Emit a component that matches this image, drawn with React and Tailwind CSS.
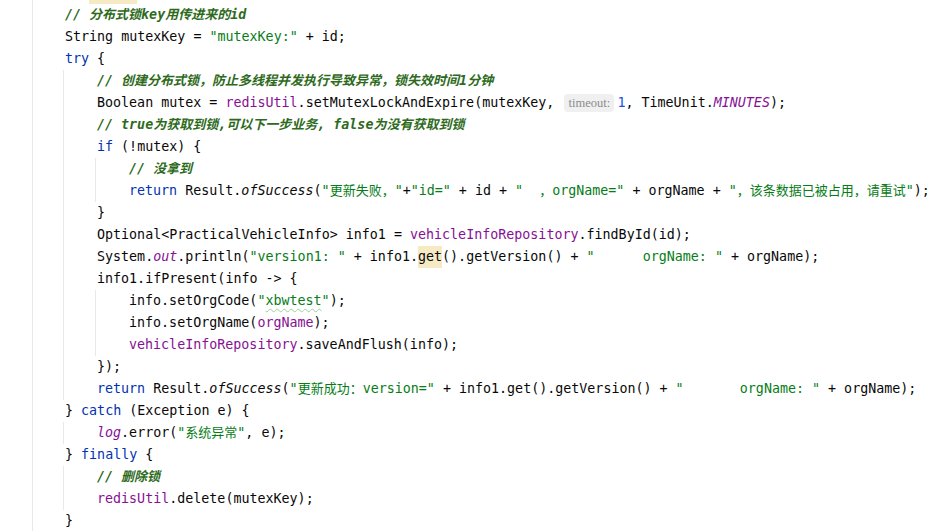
import React from "react";

const CJK = /([\u2E80-\u9FFF\uFF00-\uFFEF\u3000-\u303F]+)/;
function T({ t }) {
  return t
    .split(CJK)
    .map((p, i) =>
      i % 2 ? (
        <span key={i} className="text-[13px]">
          {p}
        </span>
      ) : (
        p
      )
    );
}

const K = ({ children }) => <span className="text-[#0033b3]">{children}</span>;
const S = ({ t, children }) => (
  <span className="text-[#067d17]">{t !== undefined ? <T t={t} /> : children}</span>
);
const N = ({ children }) => <span className="text-[#1750eb]">{children}</span>;
const F = ({ children }) => <span className="text-[#871094]">{children}</span>;
const FI = ({ children }) => <span className="text-[#871094] italic">{children}</span>;
const I = ({ children }) => <span className="italic">{children}</span>;
const Cm = ({ t }) => (
  <span className="text-[#2d6a1b] italic font-bold">
    <T t={t} />
  </span>
);

const Line = ({ children }) => <div className="h-[22px]">{children}</div>;
const Block = ({ children }) => (
  <div className="ml-[-2px] border-l border-[#e8e8e8] pl-[33px]">{children}</div>
);

const Hint = () => (
  <span className="inline-flex items-center justify-center h-[18px] w-[50px] ml-[2px] mr-[3px] rounded-[4px] bg-[#f0f0f0] text-[#8c8c8c] font-['Liberation_Serif',serif] text-[12.5px] leading-none align-middle">
    timeout:
  </span>
);

export default function App() {
  return (
    <div className="w-[937px] h-[531px] overflow-hidden bg-white text-[#080808] font-['DejaVu_Sans_Mono','Noto_Sans_CJK_SC',monospace] text-[13.33px] leading-[22px] whitespace-pre">
      <div className="ml-[32px] border-l border-[#e8e8e8] pl-[32px] mt-[-18px]">
        <Line>
          {"   "}
          <span className="inline-block h-[22px] bg-[#f5eac4]">{"      "}</span>
        </Line>
        <Line>
          <Cm t="// 分布式锁key用传进来的id" />
        </Line>
        <Line>
          String mutexKey = <S t={'"mutexKey:"'} /> + id;
        </Line>
        <Line>
          <K>try</K> {"{"}
        </Line>
        <Block>
          <Line>
            <Cm t="// 创建分布式锁，防止多线程并发执行导致异常，锁失效时间1分钟" />
          </Line>
          <Line>
            Boolean mutex = <F>redisUtil</F>.setMutexLockAndExpire(mutexKey, <Hint />
            <N>1</N>, TimeUnit.<FI>MINUTES</FI>);
          </Line>
          <Line>
            <Cm t="// true为获取到锁,可以下一步业务, false为没有获取到锁" />
          </Line>
          <Line>
            <K>if</K> (!mutex) {"{"}
          </Line>
          <Block>
            <Line>
              <Cm t="// 没拿到" />
            </Line>
            <Line>
              <K>return</K> Result.<I>ofSuccess</I>(<S t={'"更新失败，"'} />+<S t={'"id="'} /> + id +{" "}
              <S t={'"  ，orgName="'} /> + orgName + <S t={'"，该条数据已被占用，请重试"'} />
              );
            </Line>
          </Block>
          <Line>{"}"}</Line>
          <Line>
            Optional{"<"}PracticalVehicleInfo{">"} info1 = <F>vehicleInfoRepository</F>.findById(id);
          </Line>
          <Line>
            System.<FI>out</FI>.println(<S t={'"version1: "'} /> + info1.
            <span className="inline-block h-[22px] bg-[#f5eac4]">get</span>().getVersion() +{" "}
            <S t={'"      orgName: "'} /> + orgName);
          </Line>
          <Line>info1.ifPresent(info -{">"} {"{"}</Line>
          <Block>
            <Line>
              info.setOrgCode(
              <S>
                {'"'}
                <span className="underline decoration-wavy decoration-[#9fd09f] decoration-1 underline-offset-[3px]">
                  xbwtest
                </span>
                {'"'}
              </S>
              );
            </Line>
            <Line>
              info.setOrgName(<F>orgName</F>);
            </Line>
            <Line>
              <F>vehicleInfoRepository</F>.saveAndFlush(info);
            </Line>
          </Block>
          <Line>{"});"}</Line>
          <Line>
            <K>return</K> Result.<I>ofSuccess</I>(<S t={'"更新成功：version="'} /> + info1.get().getVersion() +{" "}
            <S t={'"       orgName: "'} /> + orgName);
          </Line>
        </Block>
        <Line>
          {"} "}
          <K>catch</K> (Exception e) {"{"}
        </Line>
        <Block>
          <Line>
            <FI>log</FI>.error(<S t={'"系统异常"'} />, e);
          </Line>
        </Block>
        <Line>
          {"} "}
          <K>finally</K> {"{"}
        </Line>
        <Block>
          <Line>
            <Cm t="// 删除锁" />
          </Line>
          <Line>
            <F>redisUtil</F>.delete(mutexKey);
          </Line>
        </Block>
        <Line>{"}"}</Line>
      </div>
    </div>
  );
}
